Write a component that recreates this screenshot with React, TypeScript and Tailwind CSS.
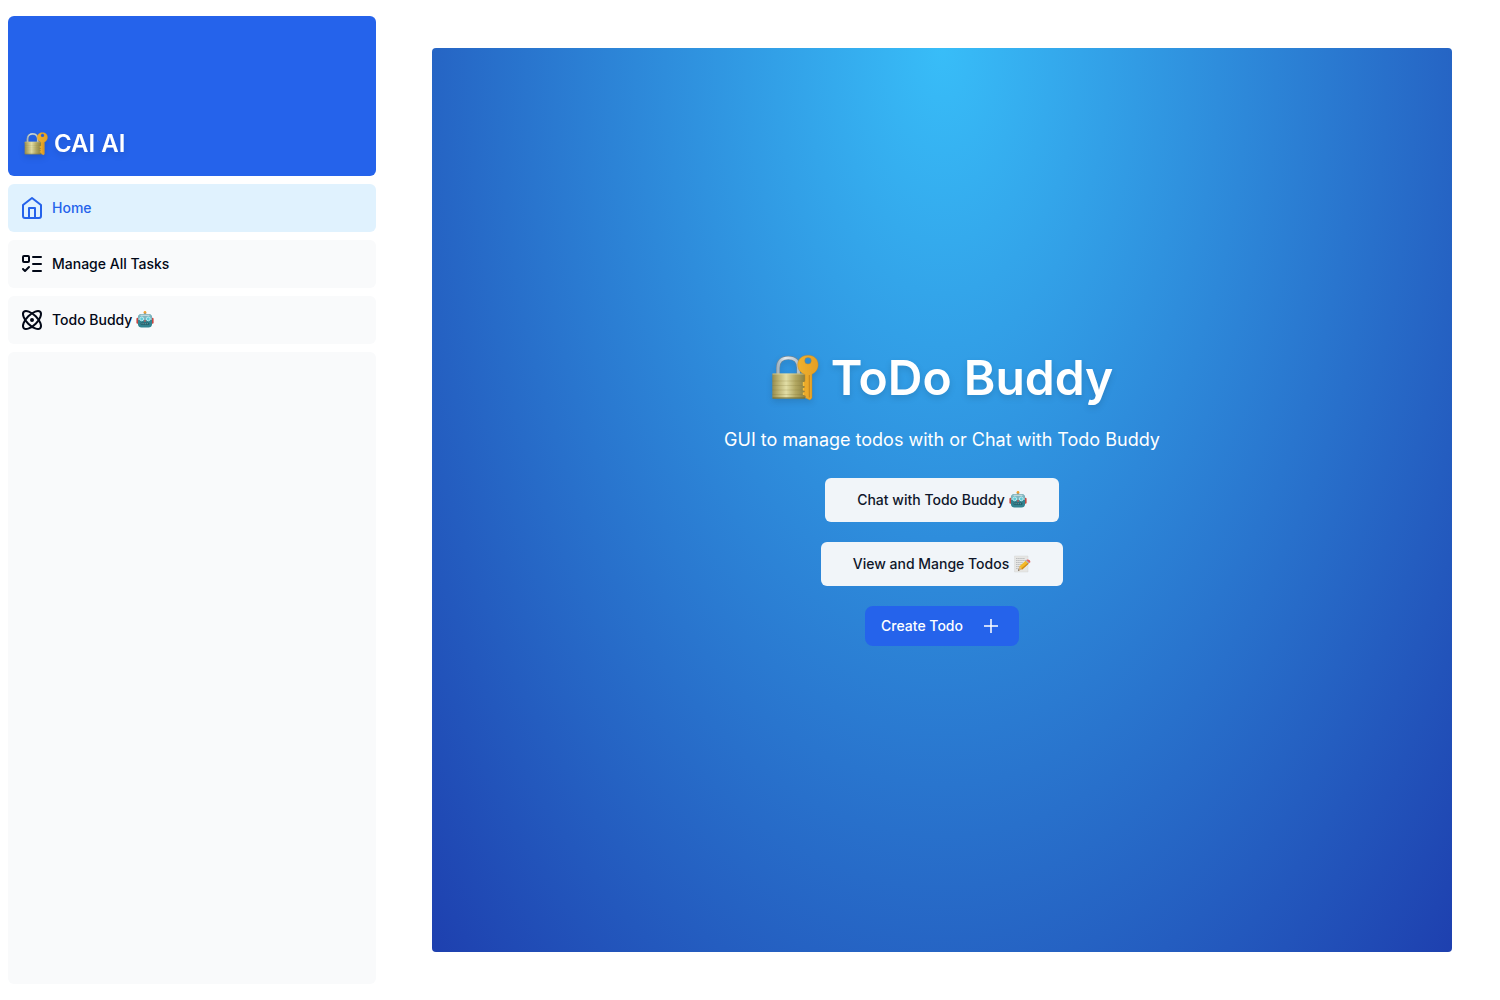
import React from "react";
import { Atom, ListTodo } from "lucide-react";

function LockEmoji({ className }: { className: string }) {
  const id = React.useId();
  return (
    <svg viewBox="0 0 48 48" className={className} role="img" aria-label="Locked with key">
      <defs>
        <linearGradient id={`${id}b`} x1="0" x2="1" y1="0" y2="0">
          <stop offset="0" stopColor="#968b4e" />
          <stop offset="0.15" stopColor="#b5ab6a" />
          <stop offset="0.42" stopColor="#e2dea6" />
          <stop offset="0.7" stopColor="#b3a862" />
          <stop offset="1" stopColor="#8b7f3f" />
        </linearGradient>
        <linearGradient id={`${id}s`} x1="0" x2="1" y1="0" y2="0">
          <stop offset="0" stopColor="#a3b5c2" />
          <stop offset="0.35" stopColor="#e3ebf1" />
          <stop offset="1" stopColor="#b2c1cc" />
        </linearGradient>
        <linearGradient id={`${id}k`} x1="0" x2="1" y1="0" y2="0">
          <stop offset="0" stopColor="#f0b12e" />
          <stop offset="1" stopColor="#e59f24" />
        </linearGradient>
      </defs>
      <path d="M7 20V14C7 7 11 3.800 17.300 3.800S27.500 7 27.500 14V20" fill="none" stroke="#6f8797" strokeWidth="4" />
      <path d="M7 20V14C7 7 11 3.800 17.300 3.800S27.500 7 27.500 14V20" fill="none" stroke={`url(#${id}s)`} strokeWidth="2.800" />
      <rect x="1.300" y="19.500" width="33" height="25" rx="0.800" fill={`url(#${id}b)`} />
      <path d="M1.300 27H34M1.300 31.500H34M1.300 36H34M1.300 40.500H34" stroke="#786f31" strokeOpacity="0.2" strokeWidth="1" />
      <path d="M1.500 20H34" stroke="#e8e3b0" strokeOpacity="0.7" strokeWidth="0.800" />
      <path d="M1.500 44H34" stroke="#71682c" strokeWidth="1" />
      <path
        fillRule="evenodd"
        fill={`url(#${id}k)`}
        stroke="#c38320"
        strokeWidth="0.400"
        d="M37 1.200C43 1.200 47.200 5 47.200 10.800C47.200 15.200 44.500 18.600 41 20.200V44L39 46L34.500 44V42L32.500 40.800V38.500L34 37.500L32.500 36.200V34L34 33L32.500 31.500V28.500L34 27.300V20.500C29.500 19 26.700 15.500 26.700 10.800C26.700 5 31 1.200 37 1.200ZM37 3.500A3.300 3.300 0 1 0 37 10.100A3.300 3.300 0 1 0 37 3.500Z"
      />
      <path d="M38.300 21V43.500" stroke="#c07f1c" strokeWidth="0.900" />
      <path d="M32.400 28V32M32.400 34V36.500M32.400 38.500V41" stroke="#f3bf3c" strokeWidth="1.200" />
    </svg>
  );
}

function RobotEmoji() {
  return (
    <svg viewBox="0 0 18 18" className="size-[18px] shrink-0" role="img" aria-label="Robot">
      <path d="M9 1.500V4" stroke="#8c979b" strokeWidth="2.400" />
      <circle cx="9" cy="1.300" r="1.300" fill="#f0a22f" />
      <rect x="0.400" y="6.700" width="3" height="6" rx="1.200" fill="#c74742" />
      <rect x="14.600" y="6.700" width="3" height="6" rx="1.200" fill="#c74742" />
      <path d="M5 3.300H13Q16 3.600 16 7V13.500Q15.700 16.500 12.500 16.500H5.500Q2.300 16.500 2 13.500V7Q2 3.600 5 3.300Z" fill="#328390" />
      <path d="M5 3.300H13Q16 3.600 16 7V9H2V7Q2 3.600 5 3.300Z" fill="#7fb6c0" />
      <path d="M4.500 4.300H13.500" stroke="#c9dadd" strokeWidth="1.200" />
      <circle cx="5.700" cy="7.900" r="1.900" fill="#62cbd8" stroke="#c5f1f5" strokeWidth="0.900" />
      <circle cx="12.300" cy="7.900" r="1.900" fill="#62cbd8" stroke="#c5f1f5" strokeWidth="0.900" />
      <path d="M9 8.500L10.100 10.400H7.900Z" fill="#e05249" />
      <rect x="4.700" y="11.500" width="8.600" height="2.500" rx="0.800" fill="#24616d" />
      <path d="M5.500 12.700H12.500" stroke="#78a5aa" strokeWidth="0.900" strokeDasharray="1 0.800" />
    </svg>
  );
}

function MemoEmoji() {
  return (
    <svg viewBox="0 0 18 18" className="size-[18px] shrink-0" role="img" aria-label="Memo">
      <path d="M1.500 1H15V17H1.500Z" fill="#e6e6e4" stroke="#d1d2d2" strokeWidth="0.400" />
      <path
        d="M3 3.500H12M3 5.500H13M3 7.500H10M3 9.500H9M3 11.500H7M3 13.500H6"
        stroke="#b2b4b5"
        strokeWidth="0.800"
        strokeDasharray="1.600 0.500"
      />
      <path d="M5 15.800L6.300 11.500L9.200 14.500Z" fill="#d9b583" />
      <path d="M5 15.800L5.500 14.200L6.600 15.300Z" fill="#444" />
      <path d="M6.300 11.500L12.600 5.800L15.600 8.800L9.200 14.500Z" fill="#f4ba29" />
      <path d="M8.300 13.500L14.800 8L15.600 8.800L9.200 14.500Z" fill="#cc861a" />
      <path d="M12.600 5.800L13.400 5.100L16.400 8.100L15.600 8.800Z" fill="#9cabb2" />
      <path d="M13.400 5.100L14.300 4.400Q17.700 4.600 17.300 7.200L16.400 8.100Z" fill="#e8605d" />
    </svg>
  );
}

function HomeIcon() {
  return (
    <svg viewBox="0 0 24 24" className="size-6" fill="none" stroke="currentColor" strokeWidth="2" strokeLinecap="round" strokeLinejoin="round" aria-hidden="true">
      <path d="m3 9 9-7 9 7v11a2 2 0 0 1-2 2H5a2 2 0 0 1-2-2z" />
      <path d="M9 22V12h6v10" />
    </svg>
  );
}

const navItem = "flex h-12 items-center gap-2 rounded-md p-3 text-sm font-medium";

export default function App() {
  return (
    <div className="flex h-screen bg-white font-['Inter',sans-serif] text-[#020817] antialiased">
      <aside className="flex w-96 shrink-0 flex-col gap-2 px-2 py-4">
        <a href="#" className="flex h-40 items-end rounded-md bg-[#2563eb] p-4 text-white">
          <span className="flex items-center gap-1.5 text-2xl font-semibold drop-shadow-md">
            <LockEmoji className="size-6 shrink-0" />
            CAI AI
          </span>
        </a>
        <nav className="flex flex-col gap-2">
          <a href="#" aria-current="page" className={`${navItem} bg-[#e0f2fe] text-[#2563eb]`}>
            <HomeIcon />
            Home
          </a>
          <a href="#" className={`${navItem} bg-[#f9fafb]`}>
            <ListTodo className="size-6" aria-hidden="true" />
            Manage All Tasks
          </a>
          <a href="#" className={`${navItem} bg-[#f9fafb]`}>
            <Atom className="size-6" aria-hidden="true" />
            <span className="flex items-center gap-1">
              Todo Buddy
              <RobotEmoji />
            </span>
          </a>
        </nav>
        <div className="grow rounded-md bg-[#f9fafb]" />
      </aside>
      <div className="grow p-12">
        <main className="flex h-full flex-col items-center justify-center gap-6 rounded-sm bg-[radial-gradient(ellipse_at_top,#38bdf8,#1e40af)] text-center text-white">
          <h1 className="flex items-center gap-3 text-5xl leading-none font-semibold drop-shadow-md">
            <LockEmoji className="size-12 shrink-0" />
            ToDo Buddy
          </h1>
          <p className="text-lg">GUI to manage todos with or Chat with Todo Buddy</p>
          <div className="flex flex-col items-center gap-5 text-sm font-medium">
            <button type="button" className="flex h-11 items-center gap-1 rounded-md bg-[#f1f5f9] px-8 text-[#0f172a]">
              Chat with Todo Buddy
              <RobotEmoji />
            </button>
            <button type="button" className="flex h-11 items-center gap-1 rounded-md bg-[#f1f5f9] px-8 text-[#0f172a]">
              View and Mange Todos
              <MemoEmoji />
            </button>
            <button type="button" className="flex h-10 items-center gap-4 rounded-lg bg-[#2563eb] px-4">
              Create Todo
              <svg viewBox="0 0 24 24" className="size-6" fill="none" stroke="currentColor" strokeWidth="1.5" aria-hidden="true">
                <path d="M12 5v14M5 12h14" />
              </svg>
            </button>
          </div>
        </main>
      </div>
    </div>
  );
}
